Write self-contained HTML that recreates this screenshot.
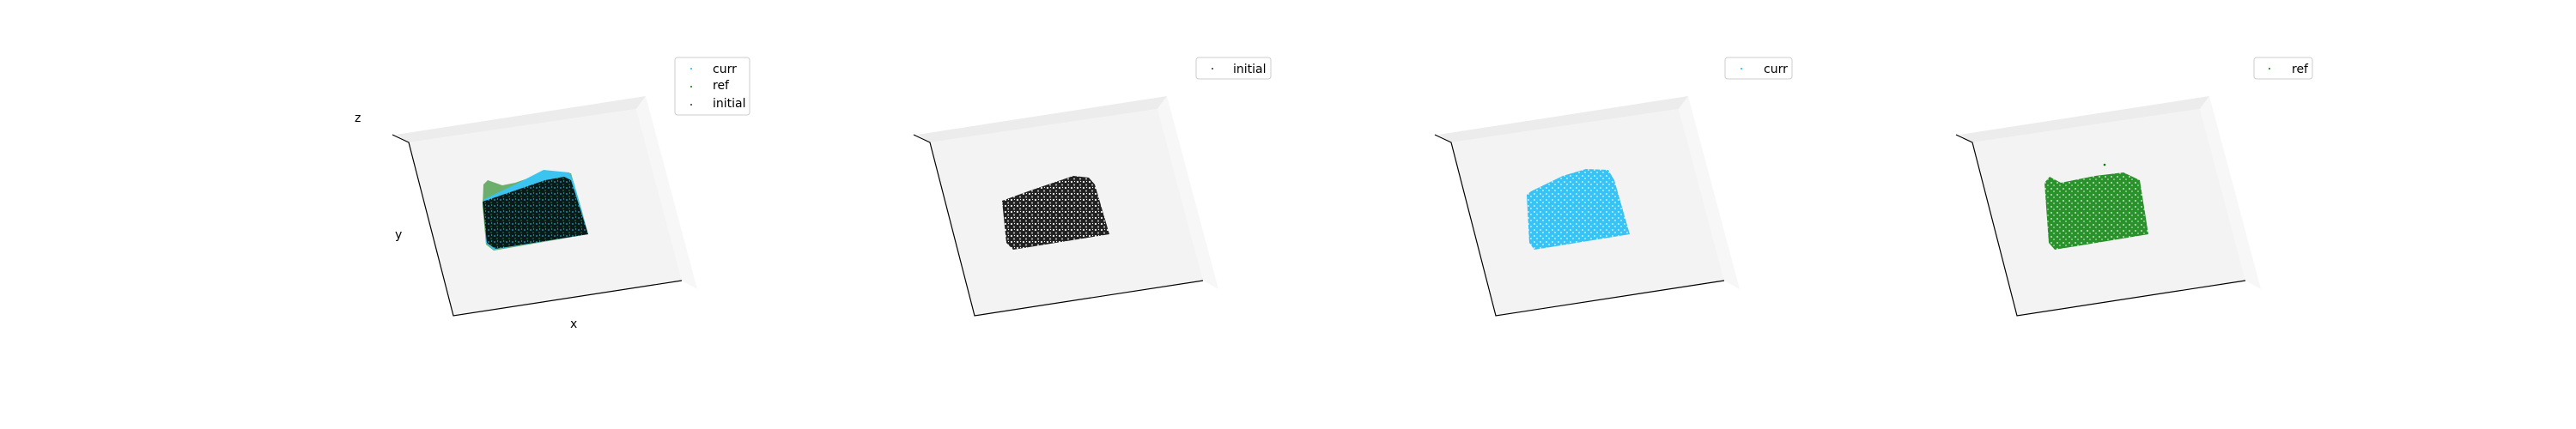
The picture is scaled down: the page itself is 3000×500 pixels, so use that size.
<!DOCTYPE html>
<html><head><meta charset="utf-8"><style>
html,body{margin:0;padding:0;background:#fff;width:3000px;height:500px;overflow:hidden}
svg{display:block}
text{font-family:"DejaVu Sans","Liberation Sans",sans-serif;font-size:14px;fill:#000}
</style></head><body>
<svg width="3000" height="500" viewBox="0 0 3000 500" xmlns="http://www.w3.org/2000/svg">
<defs>
<pattern id="pk" width="7" height="7" patternUnits="userSpaceOnUse">
<rect width="7" height="7" fill="#222"/>
<circle cx="2" cy="2" r="1.1" fill="#eee"/><circle cx="5" cy="5.5" r="1" fill="#ccc"/><circle cx="5.5" cy="1.5" r="0.6" fill="#fff"/>
</pattern>
<pattern id="pc" width="7" height="7" patternUnits="userSpaceOnUse">
<rect width="7" height="7" fill="#36c3f5"/>
<circle cx="2" cy="2" r="1" fill="#c8eefc"/><circle cx="5" cy="5" r="0.9" fill="#e0f6fe"/>
</pattern>
<pattern id="pg" width="7" height="7" patternUnits="userSpaceOnUse">
<rect width="7" height="7" fill="#2a922a"/>
<circle cx="2" cy="3" r="1" fill="#c4e2c4"/><circle cx="5" cy="6" r="0.8" fill="#d8ecd8"/>
</pattern>
<pattern id="pm" width="7" height="7" patternUnits="userSpaceOnUse">
<rect width="7" height="7" fill="#0a1a1a"/>
<circle cx="2" cy="2" r="0.9" fill="#1fa6c8"/><circle cx="5" cy="5" r="0.8" fill="#2a8a3a"/><circle cx="5.5" cy="1" r="0.6" fill="#4cc"/>
</pattern>
<g id="pane">
<polygon points="461,157 752,112 741,127 476,166" fill="#ececec"/>
<polygon points="752,112 812,337 794,327 741,127" fill="#f7f7f7"/>
<polygon points="476,166 741,127 794,327 528,368" fill="#f3f3f3"/>
<polyline points="457,157 476,166 528,368 794,327" fill="none" stroke="#000" stroke-width="1.2"/>
</g>
</defs>

<!-- panel 1 -->
<use href="#pane"/>
<text x="413" y="142">z</text>
<text x="460" y="278">y</text>
<text x="664" y="382">x</text>
<polygon points="563,215 568,210 585,216 600,213 640,199 665,202 677,243 685,273 575,292 566,285 562,240" fill="#4a9e4a" opacity="0.8"/>
<polygon points="564,232 600,215 633,198 663,201 668,212 685,273 575,291 566,283" fill="#3cc4f0"/>
<polygon points="562,235 600,222 635,210 657,206 665,210 685,273 577,290 567,283" fill="url(#pm)"/>
<rect x="786" y="67" width="87" height="67" rx="3" fill="#fff" stroke="#ccc"/>
<circle cx="805" cy="80" r="1" fill="#00bfff"/><text x="830" y="85">curr</text>
<circle cx="805" cy="101" r="1" fill="green"/><text x="830" y="104">ref</text>
<circle cx="805" cy="122" r="1" fill="#333"/><text x="830" y="125">initial</text>

<!-- panel 2 -->
<use href="#pane" transform="translate(607,0)"/>
<polygon points="1167,234 1200,222 1250,205 1268,207 1275,215 1292,273 1180,291 1172,283" fill="url(#pk)"/>
<rect x="1393" y="67" width="87" height="25" rx="3" fill="#fff" stroke="#ccc"/>
<circle cx="1412" cy="80" r="1" fill="#333"/><text x="1436" y="85">initial</text>

<!-- panel 3 -->
<use href="#pane" transform="translate(1214,0)"/>
<polygon points="1778,227 1783,223 1820,205 1847,197 1873,198 1880,210 1898,273 1787,291 1781,283" fill="url(#pc)"/>
<rect x="2009" y="67" width="78" height="25" rx="3" fill="#fff" stroke="#ccc"/>
<circle cx="2028" cy="80" r="1" fill="#00bfff"/><text x="2054" y="85">curr</text>

<!-- panel 4 -->
<use href="#pane" transform="translate(1821,0)"/>
<polygon points="2381,213 2387,206 2400,213 2440,205 2473,201 2492,210 2502,273 2393,291 2386,283" fill="url(#pg)"/>
<circle cx="2451" cy="192" r="1.3" fill="green"/>
<rect x="2625" y="67" width="68" height="25" rx="3" fill="#fff" stroke="#ccc"/>
<circle cx="2643" cy="80" r="1" fill="green"/><text x="2669" y="85">ref</text>
</svg>
</body></html>
